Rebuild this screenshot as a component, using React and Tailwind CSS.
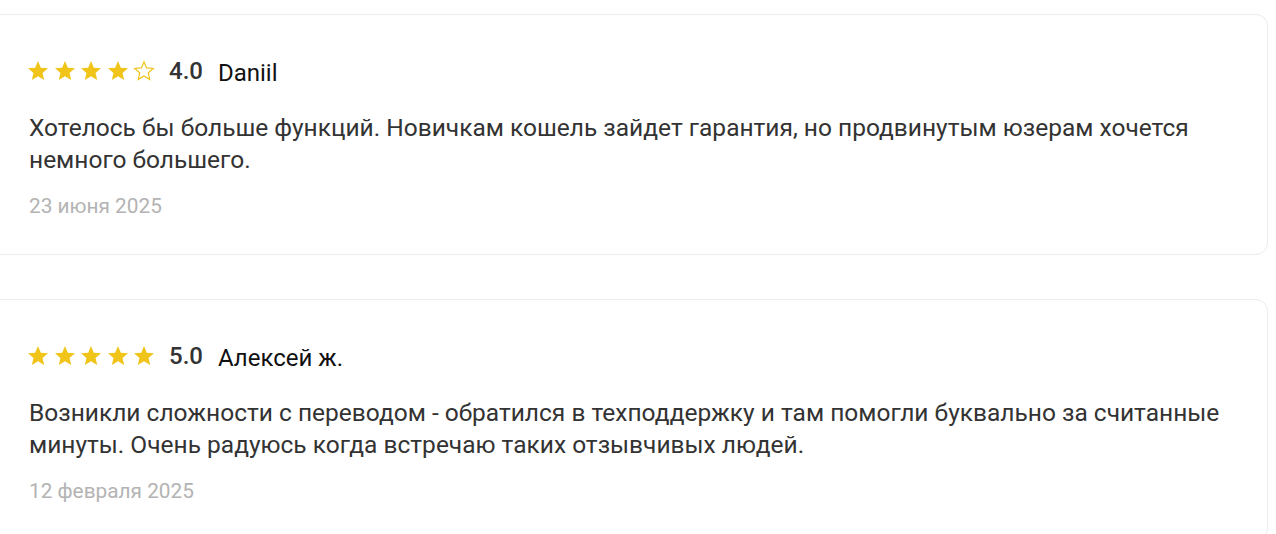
import React from "react";

function Star({ filled }) {
  const d = "M12 17.27L18.18 21l-1.64-7.03L22 9.24l-7.19-.61L12 2 9.19 8.63 2 9.24l5.46 4.73L5.82 21z";
  return (
    <svg width="24" height="24" viewBox="0 0 24 24" className="block">
      {filled ? (
        <path d={d} fill="#f0c419" />
      ) : (
        <path d={d} fill="none" stroke="#f0c419" strokeWidth="1.3" strokeLinejoin="miter" transform="translate(12 12) scale(0.93) translate(-12 -12)" />
      )}
    </svg>
  );
}

function Review({ rating, name, text, date, first }) {
  return (
    <div
      className={`ml-[-12px] w-[1280px] rounded-[12px] border border-[#ececec] bg-white pl-[40px] pr-[40px] pt-[40px] pb-[34px] ${first ? "" : "mt-[44px]"}`}
    >
      <div className="flex h-[32px] items-center">
        <div className="ml-[-3px] flex items-center gap-[2.5px]">
          {[0, 1, 2, 3, 4].map((i) => (
            <Star key={i} filled={i < Math.round(rating)} />
          ))}
        </div>
        <span className="ml-[13px] text-[24px] font-medium leading-[32px] text-[#333]">
          {rating.toFixed(1)}
        </span>
        <span className="ml-[15px] mt-[4px] text-[24px] leading-[32px] text-[#111]">{name}</span>
      </div>
      <p className="mt-[25px] max-w-[1200px] text-[24.5px] leading-[32px] text-[#333]">{text}</p>
      <div className="mt-[16px] text-[20.8px] leading-[28px] text-[#b3b3b3]">{date}</div>
    </div>
  );
}

export default function App() {
  return (
    <div
      className="min-h-[534px] overflow-hidden bg-white pt-[14px]"
      style={{ fontFamily: "Roboto, 'Noto Sans', sans-serif" }}
    >
      <Review
        first
        rating={4}
        name="Daniil"
        text="Хотелось бы больше функций. Новичкам кошель зайдет гарантия, но продвинутым юзерам хочется немного большего."
        date="23 июня 2025"
      />
      <Review
        rating={5}
        name="Алексей ж."
        text="Возникли сложности с переводом - обратился в техподдержку и там помогли буквально за считанные минуты. Очень радуюсь когда встречаю таких отзывчивых людей."
        date="12 февраля 2025"
      />
    </div>
  );
}
